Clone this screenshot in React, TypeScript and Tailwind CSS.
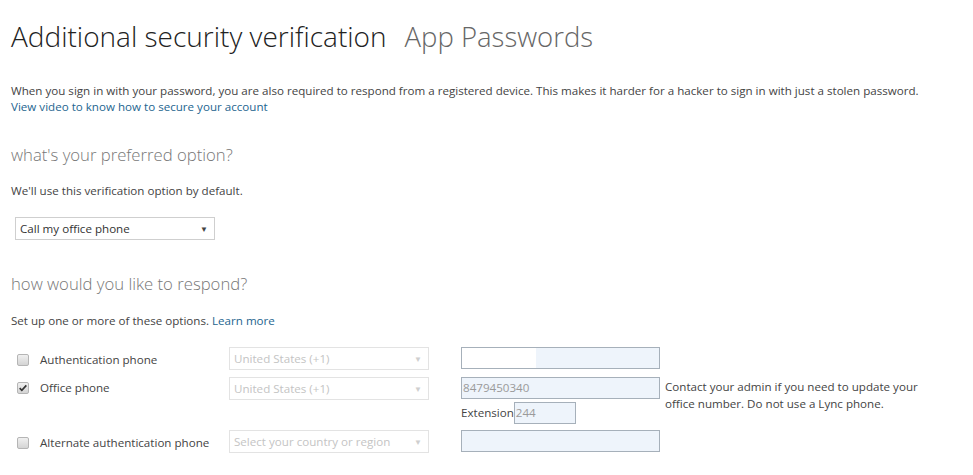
import React from "react";

const font = { fontFamily: '"Open Sans", "Noto Sans", Arial, sans-serif' };

const Checkbox: React.FC<{ checked?: boolean }> = ({ checked }) => (
  <span className="relative inline-flex h-[12px] w-[12px] shrink-0 items-center justify-center rounded-[2px] border border-[#b5b5b5] bg-gradient-to-b from-[#f0f0f0] to-[#d4d4d4]">
    {checked && (
      <svg viewBox="0 0 12 12" className="h-[10px] w-[10px]">
        <path d="M2 6.2 L4.6 8.8 L10 2.8" fill="none" stroke="#333" strokeWidth="2" />
      </svg>
    )}
  </span>
);

const Select: React.FC<{ text: string; disabled?: boolean; className?: string }> = ({ text, disabled, className = "" }) => (
  <div
    className={`flex h-[23px] items-center justify-between border px-[4px] text-[11.6px] ${
      disabled ? "border-[#e3e3e3] text-[#c4c4c4]" : "border-[#cfcfcf] text-[#333]"
    } ${className}`}
  >
    <span>{text}</span>
    <span className={`mr-[2px] text-[8px] ${disabled ? "text-[#cfcfcf]" : "text-[#444]"}`}>▼</span>
  </div>
);

const Field: React.FC<{ value?: string; w?: string; split?: boolean }> = ({ value, w = "w-[199px]", split }) => (
  <div className={`flex h-[22px] items-center border border-[#a6b0ba] bg-[#eef4fb] text-[11.6px] text-[#9a9a9a] ${w}`}>
    {split && <div className="h-full w-[74px] bg-white" />}
    {value && <span className="pl-[1px]">{value}</span>}
  </div>
);

export default function App() {
  return (
    <div className="min-h-[475px] w-[973px] bg-white pl-[11px] text-[#444]" style={font}>
      <div className="flex items-baseline gap-[18px] pt-[16px]">
        <h1 className="text-[28px] font-light leading-[40px] text-[#222]">Additional security verification</h1>
        <h1 className="text-[27.5px] font-light leading-[40px] text-[#666]">App Passwords</h1>
      </div>

      <p className="mt-[26px] text-[11.6px] leading-[16px] text-[#444]">
        When you sign in with your password, you are also required to respond from a registered device. This makes it harder for a hacker to sign in with just a stolen password.
        <br />
        <a className="text-[#24658f]">View video to know how to secure your account</a>
      </p>

      <h2 className="mt-[27px] text-[16.7px] font-light leading-[26px] text-[#777]">what's your preferred option?</h2>
      <p className="mt-[15px] text-[11.6px] leading-[16px]">We'll use this verification option by default.</p>
      <Select text="Call my office phone" className="ml-[4px] mt-[18px] w-[200px]" />

      <h2 className="mt-[31px] text-[16.7px] font-light leading-[26px] text-[#777]">how would you like to respond?</h2>
      <p className="mt-[16px] text-[11.6px] leading-[16px]">
        Set up one or more of these options. <a className="text-[#24658f]">Learn more</a>
      </p>

      <div className="mt-[18px] flex flex-col">
        <div className="flex items-start">
          <div className="flex h-[25px] w-[218px] items-center gap-[11px] pl-[6px] text-[11.6px]">
            <Checkbox />
            <span>Authentication phone</span>
          </div>
          <Select text="United States (+1)" disabled className="w-[200px]" />
          <div className="ml-[32px]">
            <Field split />
          </div>
        </div>

        <div className="mt-[5px] flex items-start">
          <div className="flex h-[21px] w-[218px] items-center gap-[11px] pl-[6px] text-[11.6px]">
            <Checkbox checked />
            <span>Office phone</span>
          </div>
          <Select text="United States (+1)" disabled className="w-[200px]" />
          <div className="ml-[32px] flex flex-col">
            <Field value="8479450340" />
            <div className="mt-[3px] flex items-center text-[11.6px]">
              <span className="text-[#444]">Extension</span>
              <Field value="244" w="w-[62px]" />
            </div>
          </div>
          <p className="ml-[5px] mt-[1px] w-[270px] text-[11.6px] leading-[17px] text-[#444]">
            Contact your admin if you need to update your office number. Do not use a Lync phone.
          </p>
        </div>

        <div className="mt-[6px] flex items-start">
          <div className="flex h-[25px] w-[218px] items-center gap-[11px] pl-[6px] text-[11.6px]">
            <Checkbox />
            <span>Alternate authentication phone</span>
          </div>
          <Select text="Select your country or region" disabled className="w-[200px]" />
          <div className="ml-[32px]">
            <Field />
          </div>
        </div>
      </div>
    </div>
  );
}
